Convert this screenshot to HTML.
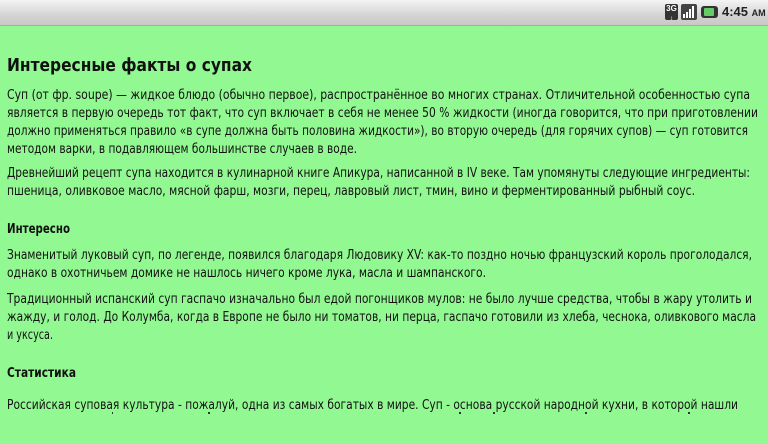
<!DOCTYPE html>
<html><head><meta charset="utf-8">
<style>
html,body{margin:0;padding:0;}
body{width:768px;height:444px;overflow:hidden;background:#92f992;position:relative;font-family:"DejaVu Sans","Liberation Sans",sans-serif;color:#111;}
#sb{position:absolute;left:0;top:0;width:768px;height:25px;background:linear-gradient(#f4f4f4,#d4d4d4 60%,#c8c8c8);border-bottom:1px solid #aaa;}
.l{position:absolute;left:7px;white-space:nowrap;font-size:13px;line-height:16px;transform-origin:0 50%;}
.h{font-weight:bold;}
#clip{position:absolute;left:0;top:30px;width:768px;height:382px;overflow:hidden;}
</style></head><body>
<div id="sb">
  <div style="position:absolute;left:665px;top:4px;width:13px;height:16px;background:#333;border-radius:2px;color:#fff;font:bold 8px 'Liberation Sans',sans-serif;text-align:center;line-height:9px;">3G<br><span style="font-size:6px">↕</span></div>
  <div style="position:absolute;left:681px;top:4px;width:16px;height:16px;background:#444;border-radius:2px;">
    <div style="position:absolute;left:2px;bottom:2px;width:2px;height:4px;background:#fff"></div>
    <div style="position:absolute;left:5px;bottom:2px;width:2px;height:6px;background:#fff"></div>
    <div style="position:absolute;left:8px;bottom:2px;width:2px;height:9px;background:#fff"></div>
    <div style="position:absolute;left:11px;bottom:2px;width:2px;height:12px;background:#fff"></div>
  </div>
  <div style="position:absolute;left:701px;top:6px;width:17px;height:12px;background:#333;border-radius:3px;"><div style="position:absolute;left:3px;top:2px;width:10px;height:8px;background:#6c6;border-radius:1px;"></div></div>
  <div style="position:absolute;left:722px;top:3px;font:bold 13px 'Liberation Sans',sans-serif;color:#222;line-height:18px;">4:45 <span style="font-size:9px">AM</span></div>
</div>
<div id="clip">
<div class="l h" style="font-size:18px;top:28px" data-w="245">Интересные факты о супах</div>
<div class="l" style="top:58px" data-w="743">Суп (от фр. soupe) — жидкое блюдо (обычно первое), распространённое во многих странах. Отличительной особенностью супа</div>
<div class="l" style="top:76px" data-w="751">является в первую очередь тот факт, что суп включает в себя не менее 50 % жидкости (иногда говорится, что при приготовлении</div>
<div class="l" style="top:94px" data-w="741">должно применяться правило «в супе должна быть половина жидкости»), во вторую очередь (для горячих супов) — суп готовится</div>
<div class="l" style="top:112px" data-w="350">методом варки, в подавляющем большинстве случаев в воде.</div>
<div class="l" style="top:136px" data-w="743">Древнейший рецепт супа находится в кулинарной книге Апикура, написанной в IV веке. Там упомянуты следующие ингредиенты:</div>
<div class="l" style="top:154px" data-w="688">пшеница, оливковое масло, мясной фарш, мозги, перец, лавровый лист, тмин, вино и ферментированный рыбный соус.</div>
<div class="l h" style="top:192px" data-w="63">Интересно</div>
<div class="l" style="top:218px" data-w="745">Знаменитый луковый суп, по легенде, появился благодаря Людовику XV: как-то поздно ночью французский король проголодался,</div>
<div class="l" style="top:236px" data-w="479">однако в охотничьем домике не нашлось ничего кроме лука, масла и шампанского.</div>
<div class="l" style="top:262px" data-w="745">Традиционный испанский суп гаспачо изначально был едой погонщиков мулов: не было лучше средства, чтобы в жару утолить и</div>
<div class="l" style="top:280px" data-w="749">жажду, и голод. До Колумба, когда в Европе не было ни томатов, ни перца, гаспачо готовили из хлеба, чеснока, оливкового масла</div>
<div class="l" style="top:298px" data-w="46">и уксуса.</div>
<div class="l h" style="top:336px" data-w="69">Статистика</div>
<div class="l" style="top:368px" data-w="731">Российская суповая культура - пожалуй, одна из самых богатых в мире. Суп - основа русской народной кухни, в которой нашли</div>
</div>
<div style="position:absolute;left:0;top:412px;width:768px;height:3px;">
<span style="position:absolute;left:112px;top:0;width:1px;height:2px;background:#333"></span>
<span style="position:absolute;left:208px;top:0;width:2px;height:2px;background:#333"></span>
<span style="position:absolute;left:459px;top:0;width:2px;height:2px;background:#333"></span>
<span style="position:absolute;left:493px;top:0;width:2px;height:2px;background:#333"></span>
<span style="position:absolute;left:585px;top:0;width:2px;height:2px;background:#333"></span>
<span style="position:absolute;left:688px;top:0;width:2px;height:2px;background:#333"></span>
</div>
<script>
document.querySelectorAll('.l').forEach(function(e){var t=+e.getAttribute('data-w');var w=e.getBoundingClientRect().width;if(w>0)e.style.transform='scaleX('+(t/w)+')';});
</script>
</body></html>
